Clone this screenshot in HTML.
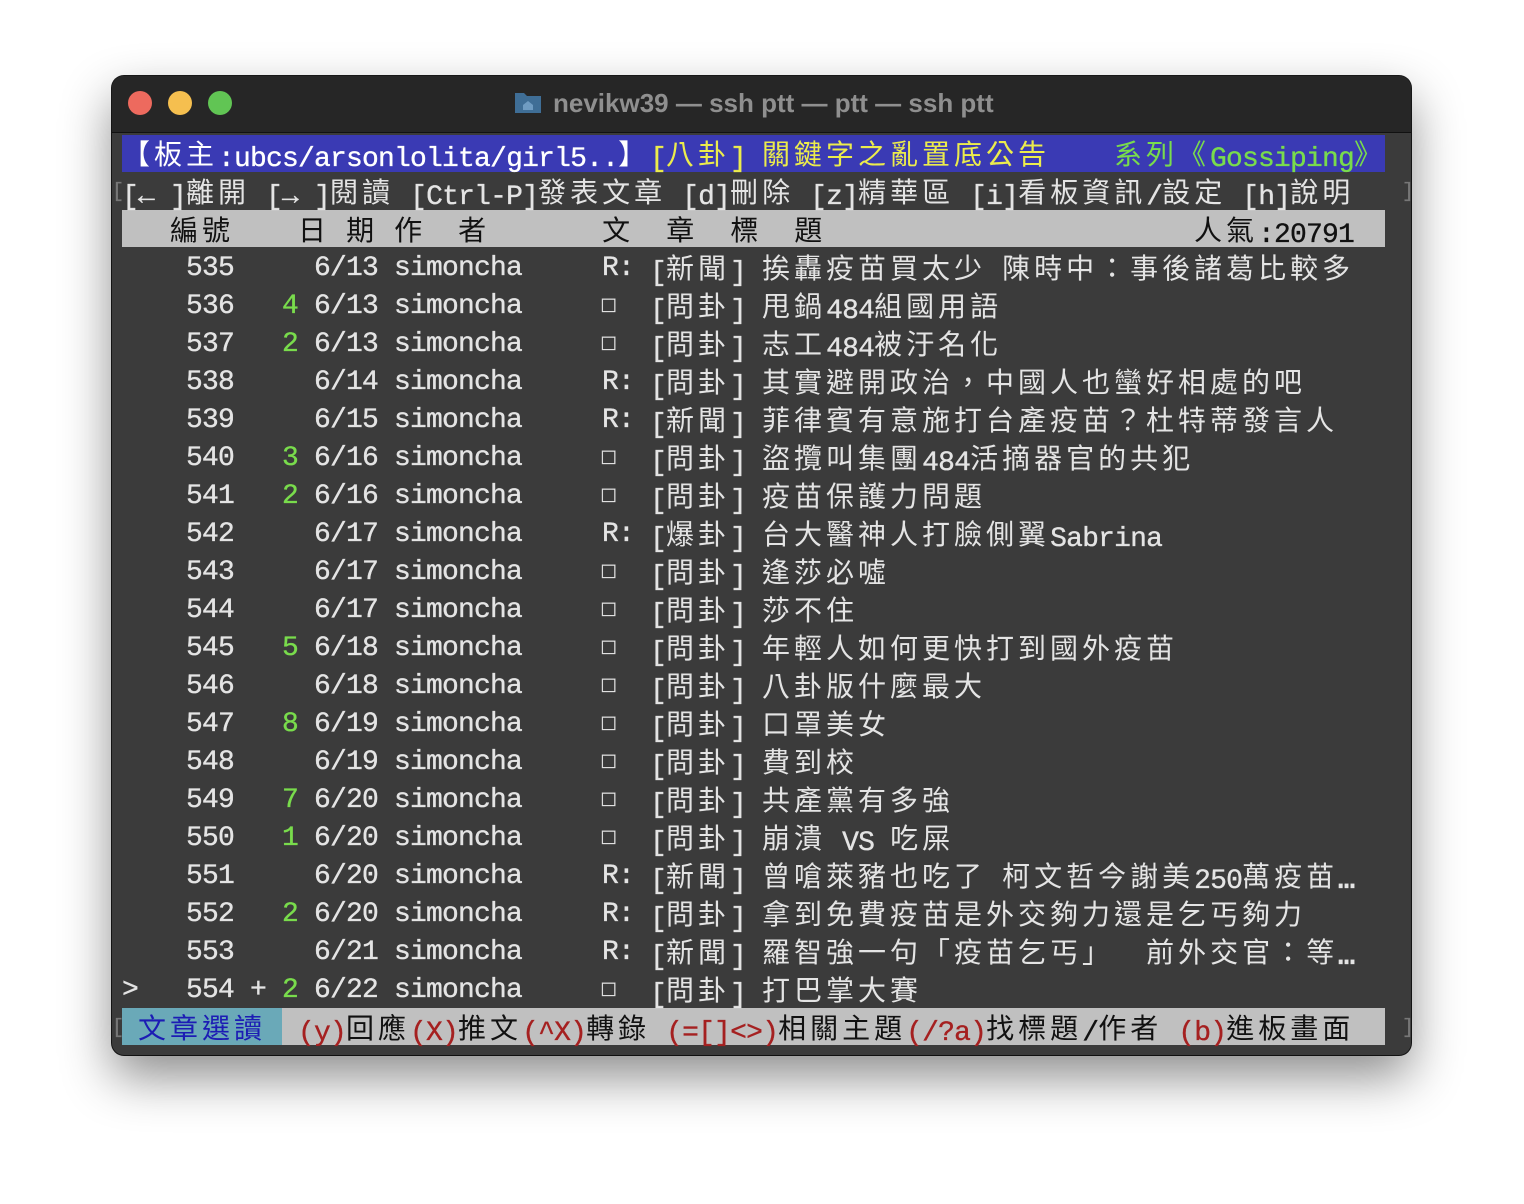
<!DOCTYPE html>
<html><head><meta charset="utf-8"><style>
body{margin:0;width:1524px;height:1204px;background:#fff;position:relative;overflow:hidden}
.win{position:absolute;left:112px;top:76px;width:1299px;height:979px;border-radius:12px;background:#3b3b3b;box-shadow:0 22px 50px rgba(0,0,0,.45),0 0 0 1px #1a1a1a;overflow:hidden}
.tb{position:absolute;left:0;top:0;width:100%;height:56px;background:#262626;border-bottom:1px solid #111}
.dot{position:absolute;top:15px;width:24px;height:24px;border-radius:50%}
.ttl{position:absolute;left:441px;top:10px;font:bold 26px/34px "Liberation Sans",sans-serif;color:#8f8f8f;white-space:pre}
.t{position:absolute;white-space:pre;font:28px/38px "Liberation Mono","Noto Sans CJK TC",monospace;letter-spacing:-0.8px;color:#e4e4e4;height:38px;padding-top:2px;-webkit-text-stroke:0.35px currentColor}
i{font-style:normal;letter-spacing:4px;font-family:"Noto Sans CJK TC","Liberation Mono",sans-serif;position:relative;top:-2px;-webkit-text-stroke:0}
.band{position:absolute;left:10px;width:1263px;height:37px}
.g{color:#79dc4c}.y{color:#ecec4c}.r{color:#a52020}.k{color:#111}.b{color:#1c1cb4}
.sq{font-size:22px}
.el{font-weight:bold;letter-spacing:0}
</style></head><body>
<div class="win">
<div class="tb">
<div class="dot" style="left:16px;background:#ed6a5e"></div>
<div class="dot" style="left:56px;background:#f5bf4f"></div>
<div class="dot" style="left:96px;background:#61c554"></div>
<svg style="position:absolute;left:402px;top:14px" width="28" height="24" viewBox="0 0 28 24"><path d="M1 3h9l3 3h14v17H1z" fill="#3f6e96"/><path d="M9 15l5-4 5 4v5h-10z" fill="#6f9cc2"/></svg>
<div class="ttl">nevikw39 — ssh ptt — ptt — ssh ptt</div>
</div>
<div class="band" style="top:59px;background:#3a3ab4"></div>
<div class="band" style="top:134px;background:#c0c0c0"></div>
<div class="band" style="top:932px;background:#c0c0c0"></div>
<div class="band" style="top:932px;width:160px;background:#6aa9b8"></div>
</div>
<div class="t" style="left:122px;top:134px;color:#fff"><i>【板主</i>:ubcs/arsonlolita/girl5..<i>】</i></div>
<div class="t y" style="left:650px;top:134px">[<i>八卦</i>] <i>關鍵字之亂置底公告</i></div>
<div class="t g" style="left:1114px;top:134px"><i>系列《</i>Gossiping<i>》</i></div>
<div class="t" style="left:122px;top:172px">[← ]<i>離開</i> [→ ]<i>閱讀</i> [Ctrl-P]<i>發表文章</i> [d]<i>刪除</i> [z]<i>精華區</i> [i]<i>看板資訊</i>/<i>設定</i> [h]<i>說明</i></div>
<div class="t" style="left:112px;top:172px;color:#777;font-size:20px">[</div>
<div class="t" style="left:1402px;top:172px;color:#777;font-size:20px">]</div>
<div class="t k" style="left:170px;top:210px"><i>編號</i>    <i>日</i> <i>期</i> <i>作</i>  <i>者</i>       <i>文</i>  <i>章</i>  <i>標</i>  <i>題</i></div>
<div class="t k" style="left:1194px;top:210px"><i>人氣</i>:20791</div>

<div class="t" style="left:186px;top:248px">535</div><div class="t" style="left:314px;top:248px">6/13 simoncha</div><div class="t" style="left:602px;top:248px">R:</div><div class="t" style="left:650px;top:248px">[<i>新聞</i>] <i>挨轟疫苗買太少</i> <i>陳時中：事後諸葛比較多</i></div>
<div class="t" style="left:186px;top:286px">536</div><div class="t g" style="left:282px;top:286px">4</div><div class="t" style="left:314px;top:286px">6/13 simoncha</div><div class="t sq" style="left:602px;top:286px">□</div><div class="t" style="left:650px;top:286px">[<i>問卦</i>] <i>甩鍋</i>484<i>組國用語</i></div>
<div class="t" style="left:186px;top:324px">537</div><div class="t g" style="left:282px;top:324px">2</div><div class="t" style="left:314px;top:324px">6/13 simoncha</div><div class="t sq" style="left:602px;top:324px">□</div><div class="t" style="left:650px;top:324px">[<i>問卦</i>] <i>志工</i>484<i>被汙名化</i></div>
<div class="t" style="left:186px;top:362px">538</div><div class="t" style="left:314px;top:362px">6/14 simoncha</div><div class="t" style="left:602px;top:362px">R:</div><div class="t" style="left:650px;top:362px">[<i>問卦</i>] <i>其實避開政治，中國人也蠻好相處的吧</i></div>
<div class="t" style="left:186px;top:400px">539</div><div class="t" style="left:314px;top:400px">6/15 simoncha</div><div class="t" style="left:602px;top:400px">R:</div><div class="t" style="left:650px;top:400px">[<i>新聞</i>] <i>菲律賓有意施打台產疫苗？杜特蒂發言人</i></div>
<div class="t" style="left:186px;top:438px">540</div><div class="t g" style="left:282px;top:438px">3</div><div class="t" style="left:314px;top:438px">6/16 simoncha</div><div class="t sq" style="left:602px;top:438px">□</div><div class="t" style="left:650px;top:438px">[<i>問卦</i>] <i>盜攬叫集團</i>484<i>活摘器官的共犯</i></div>
<div class="t" style="left:186px;top:476px">541</div><div class="t g" style="left:282px;top:476px">2</div><div class="t" style="left:314px;top:476px">6/16 simoncha</div><div class="t sq" style="left:602px;top:476px">□</div><div class="t" style="left:650px;top:476px">[<i>問卦</i>] <i>疫苗保護力問題</i></div>
<div class="t" style="left:186px;top:514px">542</div><div class="t" style="left:314px;top:514px">6/17 simoncha</div><div class="t" style="left:602px;top:514px">R:</div><div class="t" style="left:650px;top:514px">[<i>爆卦</i>] <i>台大醫神人打臉側翼</i>Sabrina</div>
<div class="t" style="left:186px;top:552px">543</div><div class="t" style="left:314px;top:552px">6/17 simoncha</div><div class="t sq" style="left:602px;top:552px">□</div><div class="t" style="left:650px;top:552px">[<i>問卦</i>] <i>逢莎必噓</i></div>
<div class="t" style="left:186px;top:590px">544</div><div class="t" style="left:314px;top:590px">6/17 simoncha</div><div class="t sq" style="left:602px;top:590px">□</div><div class="t" style="left:650px;top:590px">[<i>問卦</i>] <i>莎不住</i></div>
<div class="t" style="left:186px;top:628px">545</div><div class="t g" style="left:282px;top:628px">5</div><div class="t" style="left:314px;top:628px">6/18 simoncha</div><div class="t sq" style="left:602px;top:628px">□</div><div class="t" style="left:650px;top:628px">[<i>問卦</i>] <i>年輕人如何更快打到國外疫苗</i></div>
<div class="t" style="left:186px;top:666px">546</div><div class="t" style="left:314px;top:666px">6/18 simoncha</div><div class="t sq" style="left:602px;top:666px">□</div><div class="t" style="left:650px;top:666px">[<i>問卦</i>] <i>八卦版什麼最大</i></div>
<div class="t" style="left:186px;top:704px">547</div><div class="t g" style="left:282px;top:704px">8</div><div class="t" style="left:314px;top:704px">6/19 simoncha</div><div class="t sq" style="left:602px;top:704px">□</div><div class="t" style="left:650px;top:704px">[<i>問卦</i>] <i>口罩美女</i></div>
<div class="t" style="left:186px;top:742px">548</div><div class="t" style="left:314px;top:742px">6/19 simoncha</div><div class="t sq" style="left:602px;top:742px">□</div><div class="t" style="left:650px;top:742px">[<i>問卦</i>] <i>費到校</i></div>
<div class="t" style="left:186px;top:780px">549</div><div class="t g" style="left:282px;top:780px">7</div><div class="t" style="left:314px;top:780px">6/20 simoncha</div><div class="t sq" style="left:602px;top:780px">□</div><div class="t" style="left:650px;top:780px">[<i>問卦</i>] <i>共產黨有多強</i></div>
<div class="t" style="left:186px;top:818px">550</div><div class="t g" style="left:282px;top:818px">1</div><div class="t" style="left:314px;top:818px">6/20 simoncha</div><div class="t sq" style="left:602px;top:818px">□</div><div class="t" style="left:650px;top:818px">[<i>問卦</i>] <i>崩潰</i> VS <i>吃屎</i></div>
<div class="t" style="left:186px;top:856px">551</div><div class="t" style="left:314px;top:856px">6/20 simoncha</div><div class="t" style="left:602px;top:856px">R:</div><div class="t" style="left:650px;top:856px">[<i>新聞</i>] <i>曾嗆萊豬也吃了</i> <i>柯文哲今謝美</i>250<i>萬疫苗</i><span class="el">…</span></div>
<div class="t" style="left:186px;top:894px">552</div><div class="t g" style="left:282px;top:894px">2</div><div class="t" style="left:314px;top:894px">6/20 simoncha</div><div class="t" style="left:602px;top:894px">R:</div><div class="t" style="left:650px;top:894px">[<i>問卦</i>] <i>拿到免費疫苗是外交夠力還是乞丐夠力</i></div>
<div class="t" style="left:186px;top:932px">553</div><div class="t" style="left:314px;top:932px">6/21 simoncha</div><div class="t" style="left:602px;top:932px">R:</div><div class="t" style="left:650px;top:932px">[<i>新聞</i>] <i>羅智強一句「疫苗乞丐」</i>  <i>前外交官：等</i><span class="el">…</span></div>
<div class="t" style="left:122px;top:970px">&gt;</div><div class="t" style="left:186px;top:970px">554</div><div class="t" style="left:250px;top:970px">+</div><div class="t g" style="left:282px;top:970px">2</div><div class="t" style="left:314px;top:970px">6/22 simoncha</div><div class="t sq" style="left:602px;top:970px">□</div><div class="t" style="left:650px;top:970px">[<i>問卦</i>] <i>打巴掌大賽</i></div>
<div class="t b" style="left:138px;top:1008px"><i>文章選讀</i></div>
<div class="t k" style="left:298px;top:1008px"><span class="r">(y)</span><i>回應</i><span class="r">(X)</span><i>推文</i><span class="r">(^X)</span><i>轉錄</i> <span class="r">(=[]&lt;&gt;)</span><i>相關主題</i><span class="r">(/?a)</span><i>找標題</i>/<i>作者</i> <span class="r">(b)</span><i>進板畫面</i></div>
<div class="t" style="left:112px;top:1008px;color:#777;font-size:20px">[</div>
<div class="t" style="left:1402px;top:1008px;color:#777;font-size:20px">]</div>
</body></html>
